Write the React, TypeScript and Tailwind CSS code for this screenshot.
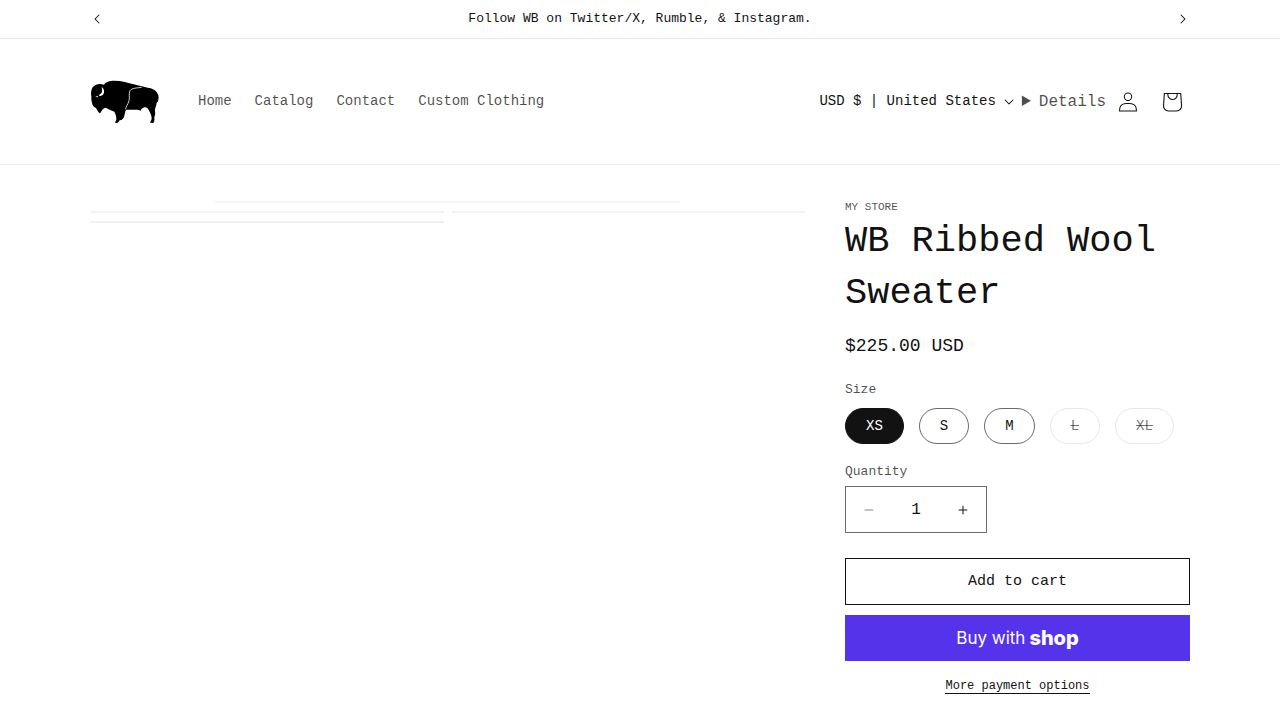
import { useState } from "react";
import clsx from "clsx";

const navLinks = ["Home", "Catalog", "Contact", "Custom Clothing"];

const sizes = [
  { label: "XS", available: true },
  { label: "S", available: true },
  { label: "M", available: true },
  { label: "L", available: false },
  { label: "XL", available: false },
];

function Caret({ className }: { className?: string }) {
  return (
    <svg viewBox="0 0 10 6" className={className} fill="currentColor" aria-hidden="true">
      <path d="M9.354.646a.5.5 0 00-.708 0L5 4.293 1.354.646a.5.5 0 00-.708.708l4 4a.5.5 0 00.708 0l4-4a.5.5 0 000-.708z" />
    </svg>
  );
}

function BisonLogo() {
  return (
    <svg viewBox="31 24 210 144" className="h-12 w-[70px]" role="img" aria-label="WB">
      <path
        fill="#000"
        d="M35 80 C33 62 36 50 48 45 C56 41 66 42 73 44 C77 36 90 32 104 32 C126 32 146 38 162 43 C176 47 190 50 204 53 C220 55 232 62 236 76 C238 84 236 92 234 97 C232 94 231 98 230 104 C228 112 225 117 226 125 C229 132 223 138 224 146 C225 153 223 158 220 159 L212 158 C211 154 215 151 216 146 C216 138 213 131 209 124 C206 116 201 111 195 112 C189 113 185 117 182 123 C179 119 175 119 170 119 C160 120 148 119 140 119 C136 122 136 130 134 137 C133 144 128 150 120 151 C118 154 117 158 113 159 L106 158 C107 154 110 152 110 147 C110 138 107 131 104 125 C95 121 84 116 77 113 C72 115 67 119 65 124 C63 129 61 131 58 128 C54 124 52 119 49 114 C42 111 38 105 37 98 C35 92 35 86 35 80 Z"
      />
      <path fill="#fff" d="M66 50 C74 56 75 66 71 73 C67 78 60 79 57 76 C59 72 64 72 66 68 C68 63 67 57 66 50 Z" />
      <path fill="#fff" d="M47 81 L55 77 L54 82 Z" />
      <path fill="none" stroke="#ccc" strokeWidth="3" d="M186 52 C172 54 156 54 151 62 C146 72 151 82 148 92 C145 104 138 110 138 118" />
    </svg>
  );
}

function AnnouncementBar() {
  return (
    <div className="border-b border-[#e7e7e7]">
      <div className="mx-auto flex h-[38px] max-w-[1200px] items-center justify-between px-[35px]">
        <button type="button" aria-label="Previous announcement" className="flex h-[38px] w-11 items-center justify-center">
          <Caret className="h-[6px] w-[10px] rotate-90" />
        </button>
        <p className="text-[13px] leading-5">Follow WB on Twitter/X, Rumble, &amp; Instagram.</p>
        <button type="button" aria-label="Next announcement" className="flex h-[38px] w-11 items-center justify-center">
          <Caret className="h-[6px] w-[10px] -rotate-90" />
        </button>
      </div>
    </div>
  );
}

function Header() {
  return (
    <header className="border-b border-[#ececec]">
      <div className="mx-auto flex h-[125px] max-w-[1200px] items-center justify-between px-[50px]">
        <div className="flex items-center gap-[38px]">
          <a href="#home">
            <BisonLogo />
          </a>
          <nav className="flex gap-[23px] pb-[2px]">
            {navLinks.map((l) => (
              <a key={l} href="#shop" className="text-sm text-[#121212bf]">
                {l}
              </a>
            ))}
          </nav>
        </div>
        <div className="-mr-1 flex items-center">
          <button type="button" className="flex items-center gap-2 text-sm">
            <span className="pb-[2px]">USD $ | United States</span>
            <Caret className="h-[6px] w-[10px]" />
          </button>
          <details className="ml-2 text-base text-[#121212bf]">
            <summary>Details</summary>
          </details>
          <a href="#account" aria-label="Log in" className="flex h-11 w-11 items-center justify-center">
            <svg viewBox="0 0 18 19" className="h-5 w-5" fill="currentColor" fillRule="evenodd">
              <path d="M6 4.5a3 3 0 116 0 3 3 0 01-6 0zm3-4a4 4 0 100 8 4 4 0 000-8zm5.58 12.15c1.12.82 1.83 2.24 1.91 4.85H1.51c.08-2.6.79-4.03 1.9-4.85C4.66 11.75 6.5 11.5 9 11.5s4.35.26 5.58 1.15zM9 10.5c-2.5 0-4.65.24-6.17 1.35C1.27 12.98.5 14.93.5 18v.5h17V18c0-3.07-.77-5.02-2.33-6.15-1.52-1.1-3.67-1.35-6.17-1.35z" />
            </svg>
          </a>
          <a href="#cart" aria-label="Cart" className="h-11 w-11">
            <svg viewBox="0 0 40 40" className="h-11 w-11" fill="currentColor" fillRule="evenodd">
              <path d="M15.75 11.8h-3.16l-.77 11.6a5 5 0 0 0 4.99 5.34h7.38a5 5 0 0 0 4.99-5.33L28.4 11.8zm0 1h-2.22l-.71 10.67a4 4 0 0 0 3.99 4.27h7.38a4 4 0 0 0 4-4.27l-.72-10.67h-2.22v.63a4.75 4.75 0 1 1-9.5 0zm8.5 0h-7.5v.63a3.75 3.75 0 1 0 7.5 0z" />
            </svg>
          </a>
        </div>
      </div>
    </header>
  );
}

function Gallery() {
  return (
    <ul className="grid w-[65%] grid-cols-2 content-start gap-2">
      <li className="col-span-2 flex justify-center">
        <div className="h-[2px] w-[65%] bg-[#f5f5f5]" />
      </li>
      <li className="h-[2px] bg-[#f3f3f3]" />
      <li className="h-[2px] bg-[#f3f3f3]" />
      <li className="h-[2px] bg-[#f0f0f0]" />
    </ul>
  );
}

function SizePicker() {
  const [size, setSize] = useState("XS");

  return (
    <fieldset className="mt-5">
      <legend className="mb-2 text-[13px] leading-5 text-[#121212bf]">Size</legend>
      <div className="flex flex-wrap gap-[15px]">
        {sizes.map((s) => (
          <label
            key={s.label}
            className={clsx(
              "flex h-9 cursor-pointer items-center rounded-full border px-5 text-sm",
              size === s.label && "border-[#121212] bg-[#121212] text-white",
              size !== s.label && s.available && "border-[#121212a0]",
              size !== s.label && !s.available && "border-[#1212121a] text-[#12121299] line-through",
            )}
          >
            <input type="radio" name="size" value={s.label} checked={size === s.label} onChange={() => setSize(s.label)} className="sr-only" />
            {s.label}
          </label>
        ))}
      </div>
    </fieldset>
  );
}

function QuantityInput() {
  const [qty, setQty] = useState(1);

  return (
    <div className="mt-[18px]">
      <label htmlFor="quantity" className="mb-1 block text-[13px] leading-5 text-[#121212bf]">
        Quantity
      </label>
      <div className="flex h-[47px] w-[142px] border border-[#121212a0]">
        <button
          type="button"
          aria-label="Decrease quantity"
          disabled={qty <= 1}
          onClick={() => setQty(qty - 1)}
          className="flex w-[46px] shrink-0 items-center justify-center disabled:text-[#12121280]"
        >
          <svg viewBox="0 0 10 2" className="w-[10px]" fill="currentColor">
            <path d="M.5 1C.5.7.7.5 1 .5h8a.5.5 0 110 1H1A.5.5 0 01.5 1z" />
          </svg>
        </button>
        <input
          id="quantity"
          type="text"
          inputMode="numeric"
          value={qty}
          onChange={(e) => setQty(Math.max(1, Number(e.target.value) || 1))}
          className="min-w-0 flex-1 text-center text-base outline-none"
        />
        <button
          type="button"
          aria-label="Increase quantity"
          onClick={() => setQty(qty + 1)}
          className="flex w-[46px] shrink-0 items-center justify-center"
        >
          <svg viewBox="0 0 10 10" className="w-[10px]" fill="currentColor">
            <path d="M1 4.51a.5.5 0 000 1h3.5l.01 3.5a.5.5 0 001-.01V5.5l3.5-.01a.5.5 0 00-.01-1H5.5L5.49.99a.5.5 0 00-1 .01v3.5l-3.5.01H1z" />
          </svg>
        </button>
      </div>
    </div>
  );
}

function ProductInfo() {
  return (
    <div className="w-[35%] pl-10">
      <p className="mb-[2px] text-[11px] leading-3 text-[#121212bf] uppercase">My Store</p>
      <h1 className="text-[37px] leading-[52px]">WB Ribbed Wool Sweater</h1>
      <p className="mt-[13px] text-lg">$225.00 USD</p>
      <SizePicker />
      <QuantityInput />
      <div className="mt-[25px] flex flex-col items-stretch">
        <button type="button" className="h-[47px] border border-[#121212] pt-[2px] text-[15px]">
          Add to cart
        </button>
        <button type="button" className="mt-[10px] flex h-[46px] items-center justify-center gap-1 bg-[#5433eb] font-['Inter',sans-serif] text-white">
          <span className="pt-[2px] text-[17px]">Buy with</span>
          <span className="text-[20px] font-extrabold">shop</span>
        </button>
        <a href="#payment" className="mt-[18px] self-center border-b border-[#121212] text-xs leading-[14px]">
          More payment options
        </a>
      </div>
    </div>
  );
}

export default function App() {
  return (
    <div className="min-h-screen bg-white font-['Liberation_Mono',monospace] text-[#121212]">
      <AnnouncementBar />
      <Header />
      <main className="mx-auto flex max-w-[1200px] px-[50px] pt-9 pb-6">
        <Gallery />
        <ProductInfo />
      </main>
    </div>
  );
}
